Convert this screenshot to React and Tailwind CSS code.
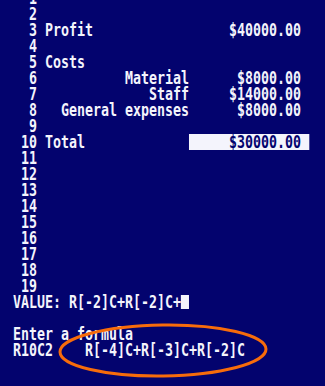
import React from "react";

const rows = [
  { n: "1" },
  { n: "2" },
  { n: "3", label: "Profit", align: "left", value: "$40000.00" },
  { n: "4" },
  { n: "5", label: "Costs", align: "left" },
  { n: "6", label: "Material", align: "right", value: "$8000.00" },
  { n: "7", label: "Staff", align: "right", value: "$14000.00" },
  { n: "8", label: "General expenses", align: "right", value: "$8000.00" },
  { n: "9" },
  { n: "10", label: "Total", align: "left", value: "$30000.00", selected: true },
  { n: "11" },
  { n: "12" },
  { n: "13" },
  { n: "14" },
  { n: "15" },
  { n: "16" },
  { n: "17" },
  { n: "18" },
  { n: "19" },
];

function Row({ r }) {
  return (
    <div className="flex h-4">
      <span className="w-[3ch] text-right">{r.n}</span>
      <span className="w-[1ch]" />
      <span className={`w-[18ch] ${r.align === "right" ? "text-right" : "text-left"}`}>
        {r.label || ""}
      </span>
      <span
        className={`w-[15ch] pr-[1ch] text-right ${
          r.selected ? "bg-[#f4f4fc] text-[#03036e]" : ""
        }`}
      >
        {r.value || ""}
      </span>
    </div>
  );
}

export default function App() {
  return (
    <div className="relative w-[325px] h-[386px] overflow-hidden bg-[#03036e]">
      <div className="w-[440px] origin-top-left scale-x-[0.7382] pl-[17.6px] font-['DejaVu_Sans_Mono',monospace] text-[18px] font-bold leading-4 text-[#f4f4fc] whitespace-pre">
        <div className="-mt-[10px]">
          {rows.map((r) => (
            <Row key={r.n} r={r} />
          ))}
          <div className="flex h-4 items-start">
            <span>VALUE: R[-2]C+R[-2]C+</span>
            <span className="mt-px h-[14px] w-[1ch] bg-[#f4f4fc]" />
          </div>
          <div className="h-4" />
          <div className="h-4">Enter a formula</div>
          <div className="h-4">R10C2    R[-4]C+R[-3]C+R[-2]C</div>
        </div>
      </div>
      <svg
        className="pointer-events-none absolute left-0 top-0"
        width="325"
        height="386"
        viewBox="0 0 325 386"
      >
        <ellipse
          cx="163"
          cy="350.5"
          rx="103"
          ry="25.5"
          fill="none"
          stroke="#f76c0b"
          strokeWidth="3"
          transform="rotate(-0.8 163 350.5)"
        />
      </svg>
    </div>
  );
}
